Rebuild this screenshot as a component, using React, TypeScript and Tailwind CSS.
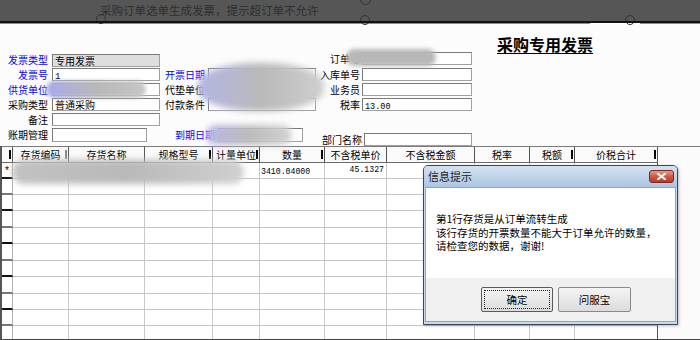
import React from "react";

const CJK = '"Noto Sans CJK SC", "Noto Sans", sans-serif';
const MONO = '"Liberation Mono", "DejaVu Sans Mono", monospace';

const cols = [11, 56, 76, 68, 47, 65, 62, 88, 55, 45, 83];
const headers = ["", "存货编码", "存货名称", "规格型号", "计量单位", "数量", "不含税单价", "不含税金额", "税率", "税额", "价税合计"];
const marks = [true, true, false, true, true, true, false, false, false, true, true];
const rowHeights = [16, 16, 16, 17, 16, 17, 16, 17, 16, 16, 13];

function Input({ w, gray, children, className = "" }: { w: string; gray?: boolean; children?: React.ReactNode; className?: string }) {
  return (
    <div
      className={`${w} h-[13px] border border-[#a0a0a0] border-t-[#7a7a7a] border-l-[#7a7a7a] ${gray ? "bg-[#dedede]" : "bg-white"} text-[10px] leading-[11px] pl-[2px] overflow-hidden whitespace-nowrap text-black ${className}`}
    >
      {children}
    </div>
  );
}

function Label({ children, blue, w, right, className = "" }: { children: React.ReactNode; blue?: boolean; w: string; right?: boolean; className?: string }) {
  return (
    <div className={`${w} ${right ? "text-right" : "text-left"} text-[10px] leading-[13px] whitespace-nowrap ${blue ? "text-[#0000ff]" : "text-black"} ${className}`}>
      {children}
    </div>
  );
}

export default function App() {
  return (
    <div className="relative w-[700px] h-[340px] overflow-hidden bg-[#fbfbfb] flex flex-col" style={{ fontFamily: CJK }}>
      {/* top bar */}
      <div className="h-[21px] bg-[#565656] flex items-center pl-[100px] relative">
        <span className="text-[11.5px] text-[#2e2e2e] tracking-[0px]">采购订单选单生成发票，提示超订单不允许</span>
        <div className="absolute left-[96px] top-[14px] w-[10px] h-[10px] rounded-full border border-[#333]" />
        <div className="absolute left-[360px] top-[-6px] w-[11px] h-[11px] rounded-full border border-[#333]" />
        <div className="absolute left-[360px] top-[15px] w-[10px] h-[10px] rounded-full border border-[#333]" />
        <div className="absolute left-[625px] top-[15px] w-[10px] h-[10px] rounded-full border border-[#333]" />
      </div>
      <div className="h-[2px] bg-[#111] relative z-10" />
      <div className="h-[1px] bg-[#8a8a8a] flex">
        <div className="w-[590px]" />
        <div className="w-[50px] bg-white" />
      </div>

      {/* form */}
      <div className="h-[124px] bg-[#fcfcfc]">
        <div className="pt-[8px] pl-[497px] h-[29px]">
          <span className="text-[16px] leading-[16px] font-bold underline underline-offset-2 text-black tracking-[0px]">采购专用发票</span>
        </div>
        <div className="flex flex-col">
          {/* row 0 */}
          <div className="flex h-[15px]">
            <div className="w-[165px] flex">
              <Label w="w-[48px]" right blue>发票类型</Label>
              <Input w="w-[108px] ml-[4px] mt-[1px]" gray>专用发票</Input>
            </div>
            <div className="w-[155px]" />
            <div className="flex -mt-[1px]">
              <Label w="w-[40px]" right>订单号</Label>
              <Input w="w-[110px] ml-[2px]" />
            </div>
          </div>
          {/* row 1 */}
          <div className="flex h-[15px]">
            <div className="w-[165px] flex">
              <Label w="w-[48px]" right blue>发票号</Label>
              <Input w="w-[108px] ml-[4px]"><span style={{ fontFamily: MONO }} className="text-[9px]">1</span></Input>
            </div>
            <div className="w-[155px] flex">
              <Label w="w-[43px]" blue>开票日期</Label>
              <Input w="w-[108px]" />
            </div>
            <div className="flex">
              <Label w="w-[40px]" right>入库单号</Label>
              <Input w="w-[110px] ml-[2px]" />
            </div>
          </div>
          {/* row 2 */}
          <div className="flex h-[15px]">
            <div className="w-[165px] flex">
              <Label w="w-[48px]" right blue>供货单位</Label>
              <Input w="w-[108px] ml-[4px]" />
            </div>
            <div className="w-[155px] flex">
              <Label w="w-[43px]">代垫单位</Label>
              <Input w="w-[108px]" />
            </div>
            <div className="flex">
              <Label w="w-[40px]" right>业务员</Label>
              <Input w="w-[110px] ml-[2px]" />
            </div>
          </div>
          {/* row 3 */}
          <div className="flex h-[15px]">
            <div className="w-[165px] flex">
              <Label w="w-[48px]" right>采购类型</Label>
              <Input w="w-[108px] ml-[4px]">普通采购</Input>
            </div>
            <div className="w-[155px] flex">
              <Label w="w-[43px]">付款条件</Label>
              <Input w="w-[108px]" />
            </div>
            <div className="flex">
              <Label w="w-[40px]" right>税率</Label>
              <Input w="w-[110px] ml-[2px]"><span style={{ fontFamily: MONO }} className="text-[8.5px]">13.00</span></Input>
            </div>
          </div>
          {/* row 4 */}
          <div className="flex h-[15px]">
            <div className="w-[165px] flex">
              <Label w="w-[48px]" right>备注</Label>
              <Input w="w-[108px] ml-[4px]" />
            </div>
          </div>
          {/* row 5 */}
          <div className="flex h-[15px]">
            <div className="w-[165px] flex">
              <Label w="w-[48px]" right>账期管理</Label>
              <Input w="w-[95px] ml-[4px]" className="h-[14px]" />
            </div>
            <div className="w-[155px] flex pl-[10px]">
              <Label w="w-[43px]" blue>到期日期</Label>
              <Input w="w-[85px]" className="h-[14px]" />
            </div>
            <div className="flex mt-[5px]">
              <Label w="w-[42px]" right>部门名称</Label>
              <Input w="w-[108px] ml-[2px]" />
            </div>
          </div>
        </div>
      </div>

      {/* table */}
      <div className="flex-1 flex flex-col border-l-2 border-[#555] border-b border-b-[#444] bg-[#fbfbfb]">
        <div className="flex h-[17px] border-t border-[#7a7a7a]">
          {cols.map((w, i) => (
            <div
              key={i}
              style={{ width: w }}
              className="relative h-full border-r border-r-[#555] border-b border-b-[#6a6a6a] bg-[#fafafa] flex items-center justify-center text-[10px] text-black whitespace-nowrap"
            >
              {headers[i]}
              {marks[i] && (
                <div className={`absolute right-[1px] top-[3px] w-[2px] h-[9px] ${i === 1 ? "bg-[#888]" : "bg-black"}`} />
              )}
            </div>
          ))}
        </div>
        {rowHeights.map((h, r) => (
          <div key={r} className="flex" style={{ height: h }}>
            {cols.map((w, i) => (
              <div
                key={i}
                style={{ width: w }}
                className={`h-full border-r ${i === 10 ? "border-r-[#555]" : i === 0 ? "border-r-[#b0b0b0]" : "border-r-[#c8c8c8]"} ${
                  r === rowHeights.length - 1 ? "" : i === 0 ? (r % 2 === 0 ? "border-b-2 border-b-[#111]" : "border-b-2 border-b-[#777]") : "border-b border-b-[#c4c4c4]"
                } bg-white text-[10px] leading-[14px] whitespace-nowrap overflow-hidden`}
              >
                {r === 0 && i === 0 && <span className="pl-[2px] text-[10px]" style={{ fontFamily: MONO }}>*</span>}
                {r === 0 && i === 5 && (
                  <span className="pl-[1px] text-[8.2px]" style={{ fontFamily: MONO }}>3410.04000</span>
                )}
                {r === 0 && i === 6 && (
                  <div className="text-right pr-[2px] text-[8.2px]" style={{ fontFamily: MONO }}>45.1327</div>
                )}
              </div>
            ))}
          </div>
        ))}
      </div>

      {/* blurred redactions */}
      <div className="absolute left-[346px] top-[49px] w-[90px] h-[17px] rounded-full bg-[#b8b8b8] blur-[2px]" />
      <div className="absolute left-[46px] top-[81px] w-[100px] h-[17px] rounded-full bg-gradient-to-r from-[#a8aae8] via-[#b8b8b8] to-[#c6c6c6] blur-[2px]" />
      <div className="absolute left-[198px] top-[63px] w-[126px] h-[48px] rounded-[45%] bg-gradient-to-r from-[#b4b5e6] via-[#b9b9b9] to-[#cfcfcf] blur-[3px]" />
      <div className="absolute left-[206px] top-[125px] w-[86px] h-[20px] rounded-full bg-gradient-to-r from-[#b6b7ea] via-[#bcbcbc] to-[#d2d2d2] blur-[3px]" />
      <div className="absolute left-[12px] top-[160px] w-[232px] h-[24px] rounded-full bg-gradient-to-r from-[#c2c2c2] via-[#b9b9b9] to-[#d0d0d0] blur-[3px]" />

      {/* dialog */}
      <div className="absolute left-[423px] top-[165px] w-[255px] h-[160px] rounded-t-[5px] border border-[#3d4754] bg-[#c6dbef] flex flex-col shadow-[1px_1px_3px_rgba(0,0,0,0.25)]">
        <div className="h-[21px] rounded-t-[4px] bg-gradient-to-b from-[#d3e2f2] to-[#abc6e3] flex items-center justify-between pl-[4px] pr-[3px]">
          <span className="text-[11px] text-[#1a1a1a]">信息提示</span>
          <div className="w-[25px] h-[13px] rounded-[3px] border border-[#7a2a20] bg-gradient-to-b from-[#e49a8a] via-[#cf5a45] to-[#b83a28] flex items-center justify-center">
            <svg width="9" height="7" viewBox="0 0 9 7">
              <path d="M1 0.8 L8 6.2 M8 0.8 L1 6.2" stroke="white" strokeWidth="2" strokeLinecap="square" />
            </svg>
          </div>
        </div>
        <div className="flex-1 mx-[1px] mb-[2px] border border-[#86a8cc] flex flex-col">
          <div className="h-[90px] bg-white pt-[24px] pl-[10px] text-[10.5px] leading-[13.5px] text-black">
            <div>第1行存货是从订单流转生成</div>
            <div>该行存货的开票数量不能大于订单允许的数量，</div>
            <div>请检查您的数据，谢谢!</div>
          </div>
          <div className="flex-1 bg-[#f0f0f0] flex pl-[55px] pt-[9px] gap-[5px]">
            <div className="w-[72px] h-[25px] rounded-[2px] border border-[#5a5a5a] bg-gradient-to-b from-[#f4f4f4] to-[#dcdcdc] p-[2px]">
              <div className="w-full h-full border border-dotted border-[#222] flex items-center justify-center text-[10.5px] text-black">确定</div>
            </div>
            <div className="w-[73px] h-[25px] rounded-[2px] border border-[#8a8a8a] bg-gradient-to-b from-[#f4f4f4] to-[#dcdcdc] flex items-center justify-center text-[10.5px] text-black">问服宝</div>
          </div>
        </div>
      </div>
    </div>
  );
}
